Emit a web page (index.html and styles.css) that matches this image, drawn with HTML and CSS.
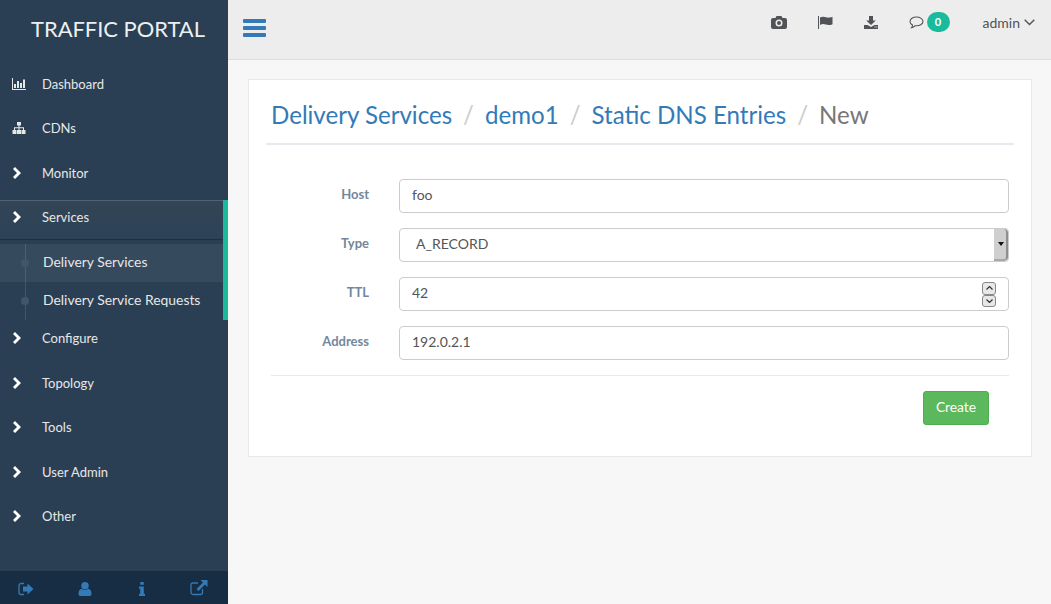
FILE: index.html

```html
<!DOCTYPE html>
<html lang="en">
<head>
  <meta charset="UTF-8">
  <meta name="viewport" content="width=device-width, initial-scale=1">
  <title>Traffic Portal - New Static DNS Entry</title>
  <link rel="stylesheet" href="styles.css">
</head>
<body>
  <div class="sidebar">
    <div class="site-title">TRAFFIC PORTAL</div>
    <ul class="side-menu">
      <li><a><svg class="side-icon" viewBox="0 0 14 12"><path d="M0 0h1v11h13v1H0z"/><path d="M2 6h2v4H2zM5 3h2v7H5zM8 5h2v5H8zM11 1.500h2V10h-2z"/></svg>Dashboard</a></li>
      <li><a><svg class="side-icon" viewBox="0 0 14 12"><path d="M5 0h4v3.500H7.500V5.200H12V8h1.500v4h-4V8H11V6.300H7.500V8H9v4H5V8h1.500V6.300H3V8h1.500v4h-4V8H2V5.200h4.500V3.500H5z"/></svg>CDNs</a></li>
      <li><a><svg class="side-icon chevron" viewBox="0 0 9 12"><path d="M2 0l6 6-6 6-2-2 4-4-4-4z"/></svg>Monitor</a></li>
      <li class="active">
        <a><svg class="side-icon chevron" viewBox="0 0 9 12"><path d="M2 0l6 6-6 6-2-2 4-4-4-4z"/></svg>Services</a>
        <ul class="child-menu">
          <li class="current"><a>Delivery Services</a></li>
          <li><a>Delivery Service Requests</a></li>
        </ul>
      </li>
      <li><a><svg class="side-icon chevron" viewBox="0 0 9 12"><path d="M2 0l6 6-6 6-2-2 4-4-4-4z"/></svg>Configure</a></li>
      <li><a><svg class="side-icon chevron" viewBox="0 0 9 12"><path d="M2 0l6 6-6 6-2-2 4-4-4-4z"/></svg>Topology</a></li>
      <li><a><svg class="side-icon chevron" viewBox="0 0 9 12"><path d="M2 0l6 6-6 6-2-2 4-4-4-4z"/></svg>Tools</a></li>
      <li><a><svg class="side-icon chevron" viewBox="0 0 9 12"><path d="M2 0l6 6-6 6-2-2 4-4-4-4z"/></svg>User Admin</a></li>
      <li><a><svg class="side-icon chevron" viewBox="0 0 9 12"><path d="M2 0l6 6-6 6-2-2 4-4-4-4z"/></svg>Other</a></li>
    </ul>
    <div class="side-footer">
      <svg class="foot-icon signout" viewBox="0 0 16 14"><path d="M6 1.500H3A2 2 0 0 0 1 3.500v7a2 2 0 0 0 2 2h3" fill="none" stroke="currentColor" stroke-width="1.300"/><path d="M9.500 1.500L15.500 7l-6 5.500V9.500H5v-5h4.500z"/></svg>
      <svg class="foot-icon" viewBox="0 0 14 15"><circle cx="7" cy="4" r="4"/><path d="M0 12.500C0 9.500 1.500 7.500 3.500 7.200 4.500 8 5.700 8.500 7 8.500s2.500-.5 3.500-1.300c2 .3 3.500 2.300 3.500 5.300 0 1.500-1 2.500-2.500 2.500h-9C1 15 0 14 0 12.500z"/></svg>
      <svg class="foot-icon info" viewBox="0 0 6 14"><path d="M1.200 0h3.600v2.800H1.200zM0 4.500h4.800v7.300H6V14H0v-2.200h1.200V6.700H0z"/></svg>
      <svg class="foot-icon link" viewBox="0 0 18 16"><path d="M12.500 9v3.500a2 2 0 0 1-2 2H3a2 2 0 0 1-2-2V5a2 2 0 0 1 2-2h5" fill="none" stroke="currentColor" stroke-width="1.300"/><path d="M10.500 0H17.500V7L15 4.500 8.500 11 6.500 9 13 2.500z"/></svg>
    </div>
  </div>

  <div class="main">
    <div class="topbar">
      <svg class="menu-toggle" viewBox="0 0 23 18"><path d="M1 0h21a1 1 0 0 1 1 1v2a1 1 0 0 1-1 1H1a1 1 0 0 1-1-1V1a1 1 0 0 1 1-1zM1 7h21a1 1 0 0 1 1 1v2a1 1 0 0 1-1 1H1a1 1 0 0 1-1-1V8a1 1 0 0 1 1-1zM1 14h21a1 1 0 0 1 1 1v2a1 1 0 0 1-1 1H1a1 1 0 0 1-1-1v-2a1 1 0 0 1 1-1z"/></svg>
      <div class="top-links">
        <svg class="top-icon camera" viewBox="0 0 16 13" fill-rule="evenodd"><path d="M5.500 0h5L11.500 2H14a2 2 0 0 1 2 2v7a2 2 0 0 1-2 2H2a2 2 0 0 1-2-2V4a2 2 0 0 1 2-2h2.500zM8 3.500a3.500 3.500 0 1 0 0 7 3.500 3.500 0 0 0 0-7zM8 5a2 2 0 1 1 0 4 2 2 0 0 1 0-4z"/></svg>
        <svg class="top-icon flag" viewBox="0 0 15 13"><path d="M0 0h1v13H0z"/><path d="M2 1.500C4 .3 6 .5 8 1.200s3.500.6 6.500-.4v7.400c-3 1.100-4.500 1.100-6.500.4s-4-.8-6 .4z"/></svg>
        <svg class="top-icon download" viewBox="0 0 14 13"><path d="M5 0h4v4.500h2.800L7 9 2.200 4.500H5z"/><path d="M0 9h3.500L7 11l3.500-2H14v4H0zM10.500 10.500h1v1h-1zM12.300 10.500h1v1h-1z" fill-rule="evenodd"/></svg>
        <span class="messages">
          <svg class="comment" viewBox="0 0 15 13"><path d="M7.500 1C3.900 1 1 3 1 5.500c0 1.500 1 2.700 2.500 3.500 0 1-.3 1.800-1 2.800 1.500-.3 2.800-1.100 3.700-2.100.5.100.9.100 1.300.100 3.600 0 6.500-2 6.500-4.300S11.100 1 7.500 1z" fill="none" stroke="currentColor" stroke-width="1.100"/></svg>
          <span class="badge">0</span>
        </span>
        <span class="user-menu">admin
          <svg class="caret" viewBox="0 0 11 7"><path d="M.7.700l4.800 4.800L10.300.700" fill="none" stroke="currentColor" stroke-width="1.400"/></svg>
        </span>
      </div>
    </div>

    <div class="content">
      <div class="panel">
        <ol class="breadcrumb">
          <li><a>Delivery Services</a></li>
          <li class="sep">/</li>
          <li><a>demo1</a></li>
          <li class="sep">/</li>
          <li><a>Static DNS Entries</a></li>
          <li class="sep">/</li>
          <li class="now">New</li>
        </ol>
        <form class="entry-form">
          <div class="form-row">
            <label for="host">Host</label>
            <input id="host" class="form-control" type="text" value="foo">
          </div>
          <div class="form-row">
            <label for="type">Type</label>
            <div class="select-wrap">
              <select id="type" class="form-control"><option>A_RECORD</option></select>
              <span class="select-arrow"></span>
            </div>
          </div>
          <div class="form-row">
            <label for="ttl">TTL</label>
            <div class="select-wrap">
              <input id="ttl" class="form-control" type="text" value="42">
              <span class="spinner">
                <span class="spin-btn"><svg viewBox="0 0 7 4"><path d="M.5 3.500l3-3 3 3" fill="none" stroke="#333" stroke-width="1.200"/></svg></span>
                <span class="spin-btn"><svg viewBox="0 0 7 4"><path d="M.5.500l3 3 3-3" fill="none" stroke="#333" stroke-width="1.200"/></svg></span>
              </span>
            </div>
          </div>
          <div class="form-row">
            <label for="address">Address</label>
            <input id="address" class="form-control" type="text" value="192.0.2.1">
          </div>
          <div class="form-actions">
            <button class="btn-create" type="button">Create</button>
          </div>
        </form>
      </div>
    </div>
  </div>
</body>
</html>
```

FILE: styles.css

```css
* { box-sizing: border-box; }
html, body { height: 100%; }
body { margin: 0; display: flex; height: 604px; overflow: hidden; background: #f7f7f7; font-family: Lato, "Open Sans", sans-serif; font-size: 13px; color: #73879c; }
ul, ol { list-style: none; margin: 0; padding: 0; }

.sidebar { width: 228px; flex: none; display: flex; flex-direction: column; background: #2a3f54; color: #e7e7e7; }
.site-title { height: 66.5px; padding: 14px 0 0 31px; font-size: 21.900px; line-height: 30px; color: #ecf0f1; }
.side-menu { flex: 1; }
.side-menu > li > a { display: flex; align-items: center; height: 38.5px; margin-bottom: 6px; padding: 0 0 4px 12px; color: #e7e7e7; }
.side-icon { width: 14px; height: 12px; margin-right: 16px; fill: currentColor; }
.side-icon.chevron { width: 9px; margin-left: 1px; margin-right: 20px; fill: #fff; }
.side-menu > li.active { margin-bottom: 1px; border-right: 5px solid #1abb9c; }
.side-menu > li.active > a { margin-bottom: 5.5px; background: linear-gradient(#334556, #2c4257); box-shadow: rgba(0,0,0,.25) 0 1px 0, inset rgba(255,255,255,.16) 0 1px 0; }
.child-menu { position: relative; }
.child-menu::before { content: ""; position: absolute; left: 25px; top: 0; bottom: 0; width: 1px; background: #425668; }
.child-menu li { position: relative; height: 38px; }
.child-menu li::before { content: ""; position: absolute; left: 21px; top: 15px; width: 8px; height: 8px; border-radius: 50%; background: #425668; }
.child-menu li.current { background: rgba(255,255,255,.06); }
.child-menu a { display: block; padding: 0 0 0 43px; line-height: 35px; font-size: 13.900px; color: #e7e7e7; }
.side-footer { height: 33px; flex: none; display: grid; grid-template-columns: repeat(4, 1fr); justify-items: center; align-items: center; padding: 2px 1px 0 0; background: #172d44; color: #337ab7; }
.foot-icon { width: 16px; height: 14px; fill: currentColor; }
.foot-icon.signout { margin-right: 4px; }
.foot-icon.info { width: 6px; }
.foot-icon.link { width: 18px; height: 16px; margin-top: -2px; }

.main { flex: 1; min-width: 0; display: flex; flex-direction: column; }
.topbar { height: 60px; flex: none; display: flex; align-items: flex-start; padding: 19px 16px 0 15px; background: #ededed; border-bottom: 1px solid #d9dee4; color: #515356; }
.menu-toggle { width: 23px; height: 18px; fill: #337ab7; }
.top-links { margin-left: auto; display: flex; align-items: center; height: 20px; margin-top: -7px; }
.top-icon { fill: currentColor; height: 13px; }
.top-icon.camera { width: 16px; margin-right: 31px; }
.top-icon.flag { width: 15px; margin-right: 31px; }
.top-icon.download { width: 14px; margin-right: 31px; }
.messages { display: flex; align-items: center; margin-right: 33px; }
.comment { width: 15px; height: 13px; margin-right: 3px; }
.badge { width: 23px; height: 20px; border-radius: 10px; background: #1abb9c; color: #fff; font-size: 11px; font-weight: 700; line-height: 20px; text-align: center; }
.user-menu { display: flex; align-items: center; gap: 4px; font-size: 14px; color: #515356; }
.caret { width: 11px; height: 7px; }

.content { flex: 1; padding: 19px 19px 0 20px; }
.panel { height: 378px; padding: 10px 17px 0; background: #fff; border: 1px solid #e6e9ed; }
.breadcrumb { display: flex; height: 55px; padding: 9px 0 0 5px; border-bottom: 2px solid #e6e9ed; font-size: 24.100px; line-height: 32px; color: #777; }
.breadcrumb a { color: #337ab7; }
.breadcrumb .sep { padding: 0 11px; color: #ccc; }

.entry-form { padding: 34px 5px 0 5px; }
.form-row { display: flex; align-items: flex-start; margin-bottom: 15px; }
.form-row label { width: 98px; margin-right: 30px; padding-top: 6px; font-weight: 700; text-align: right; line-height: 18px; }
.form-row .form-control, .select-wrap { flex: 1; }
.form-control { display: block; width: 100%; height: 34px; padding: 4px 12px 8px; background: #fff; border: 1px solid #ccc; border-radius: 4px; font-family: inherit; font-size: 14px; color: #555; }
select.form-control { appearance: none; padding-left: 16px; }
.select-wrap { position: relative; }
.select-arrow { position: absolute; right: 1px; top: 1px; bottom: 1px; width: 14px; background: #cfcfcf; border-right: 2px solid #8e8e8e; border-bottom: 2px solid #a8a8a8; border-radius: 0 4px 4px 0; }
.select-arrow::after { content: ""; position: absolute; left: 4px; top: 13px; border-left: 3px solid transparent; border-right: 3px solid transparent; border-top: 4px solid #111; }
.spinner { position: absolute; right: 13px; top: 5px; display: flex; flex-direction: column; }
.spin-btn { display: flex; align-items: center; justify-content: center; width: 14px; height: 12.5px; background: #e8e8e8; border: 1px solid #888; border-radius: 3px; }
.spin-btn svg { width: 7px; height: 4px; }
.form-actions { display: flex; justify-content: flex-end; margin-top: 15px; padding: 15px 20px 0 0; border-top: 1px solid #e6e9ed; }
.btn-create { width: 66px; height: 34px; padding: 0 0 3px; background: #5cb85c; border: 1px solid #4cae4c; border-radius: 3px; font-family: inherit; font-size: 13.800px; color: #fff; }
```
